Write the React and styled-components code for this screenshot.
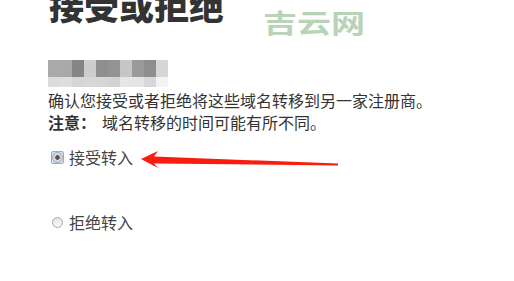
import styled, { createGlobalStyle } from "styled-components";

const GlobalStyle = createGlobalStyle`
  html, body {
    margin: 0;
    padding: 0;
    background: #ffffff;
  }
  body {
    font-family: "Noto Sans CJK SC", "Noto Sans", "Liberation Sans", sans-serif;
    color: #333333;
  }
`;

const mosaicTop = ["#aaaaaa", "#a9a9a9", "#858585", "#cdcdcd", "#8f8f8f", "#939393", "#c6c6c6", "#9a9a9a", "#8e8e8e", "#d6d6d6"];
const mosaicBottom = ["#dcdcdc", "#dedede", "#d5d5d5", "#d7d7d7", "#d6d6d6", "#d3d3d3", "#e6e6e6", "#e5e5e5", "#d8d8d8", "#f3f3f3"];

const Page = styled.div`
  position: relative;
  width: 514px;
  height: 281px;
  overflow: hidden;
  padding-left: 48px;
  box-sizing: border-box;
`;

const Title = styled.h1`
  margin: -13px 0 0 1px;
  font-size: 35px;
  line-height: 35px;
  font-weight: 900;
  color: #333333;
`;

const Watermark = styled.div`
  position: absolute;
  left: 263px;
  top: 9px;
  font-size: 34px;
  line-height: 34px;
  color: #b9d3b9;
  font-weight: 700;
  transform: scaleY(0.76);
  transform-origin: top left;
`;

const Mosaic = styled.div`
  margin-top: 38px;
  display: grid;
  grid-template-columns: repeat(10, 12px);
  grid-template-rows: 17px 10px;
  width: 120px;
`;

const Cell = styled.div`
  background: ${(p) => p.$c};
`;

const Notice = styled.div`
  margin-top: 2px;
  font-size: 16px;
  line-height: 22px;
  color: #333333;
`;

const Strong = styled.b`
  font-weight: 700;
  margin-right: 6px;
`;

const Options = styled.div`
  margin-top: 15px;
  display: flex;
  flex-direction: column;
  gap: 46px;
`;

const OptionRow = styled.label`
  display: flex;
  align-items: center;
  gap: 5px;
  font-size: 16px;
  line-height: 19px;
  color: #444444;
  padding-left: 3px;
`;

const RadioBox = styled.span`
  width: 13px;
  height: 13px;
  box-sizing: border-box;
  display: flex;
  align-items: center;
  justify-content: center;
  border: 1px solid ${(p) => (p.$focused ? "#7fb3ec" : "transparent")};
  border-radius: 2px;
  background: ${(p) => (p.$focused ? "#cfe3fa" : "transparent")};
`;

const RadioDot = styled.span`
  width: 11px;
  height: 11px;
  box-sizing: border-box;
  border-radius: 50%;
  border: 1px solid #a8a8a8;
  background: ${(p) =>
    p.$checked
      ? "radial-gradient(circle, #555 0 2px, #d8d8d8 2.5px)"
      : "linear-gradient(#e4e4e4, #fafafa)"};
`;

const Arrow = styled.svg`
  position: absolute;
  left: 138px;
  top: 148px;
`;

const App = () => (
  <>
    <GlobalStyle />
    <Page>
      <Title>接受或拒绝</Title>
      <Watermark>吉云网</Watermark>
      <Mosaic>
        {mosaicTop.map((c, i) => (
          <Cell key={"t" + i} $c={c} />
        ))}
        {mosaicBottom.map((c, i) => (
          <Cell key={"b" + i} $c={c} />
        ))}
      </Mosaic>
      <Notice>
        确认您接受或者拒绝将这些域名转移到另一家注册商。
        <br />
        <Strong>注意：</Strong>域名转移的时间可能有所不同。
      </Notice>
      <Options>
        <OptionRow>
          <RadioBox $focused>
            <RadioDot $checked />
          </RadioBox>
          接受转入
        </OptionRow>
        <OptionRow>
          <RadioBox>
            <RadioDot />
          </RadioBox>
          拒绝转入
        </OptionRow>
      </Options>
      <Arrow width="205" height="24" viewBox="0 0 205 24">
        <path
          d="M3 11 L20 3 L16 8.5 L200 15.5 L200 17.5 L16 15.5 L20 20 Z"
          fill="#fb1c10"
        />
      </Arrow>
    </Page>
  </>
);

export default App;
